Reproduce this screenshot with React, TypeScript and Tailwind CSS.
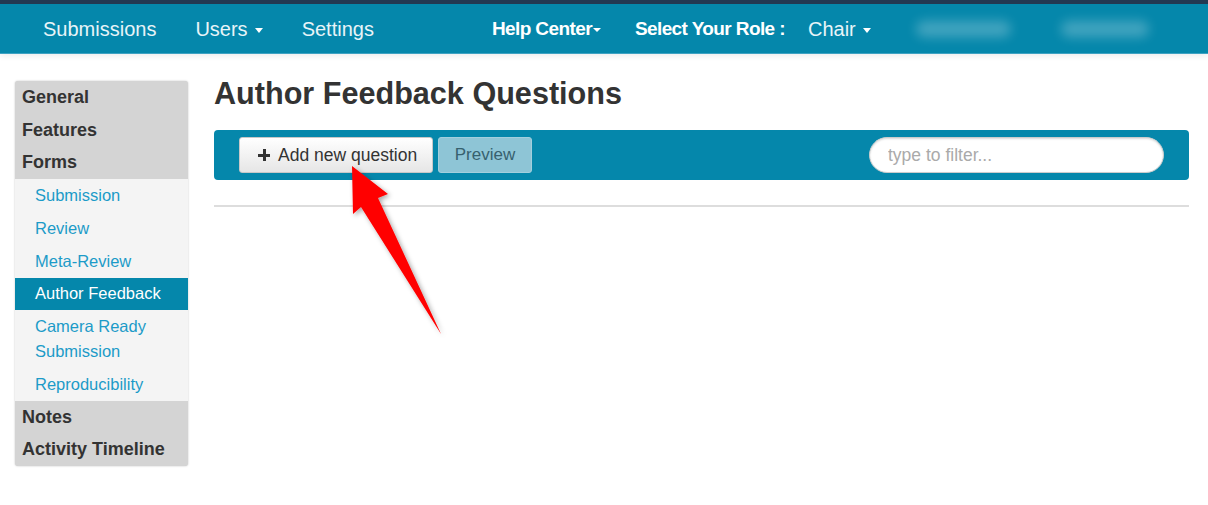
const Caret = () => (
  <span className="ml-[7px] inline-block h-0 w-0 border-x-[4.5px] border-t-[5px] border-x-transparent border-t-white align-middle" />
);

const topItem = "px-[7px] py-[4px] text-[18px] leading-[24.5px] font-bold text-[#333]";
const subItem = "pl-[20px] pr-[7px] py-[4px] text-[16.5px] leading-[25px] text-[#1c9bc8]";

const Sidebar = () => (
  <div className="mt-[3px] w-[173px] shrink-0 self-start overflow-hidden rounded-[3px] bg-[#d4d4d4] shadow-[0_0_2px_rgba(0,0,0,0.25)]">
    <div className={topItem}>General</div>
    <div className={topItem}>Features</div>
    <div className={topItem}>Forms</div>
    <div className="bg-[#f4f4f4]">
      <div className={subItem}>Submission</div>
      <div className={subItem}>Review</div>
      <div className={subItem}>Meta-Review</div>
      <div className="bg-[#0587ab] pl-[20px] pr-[7px] py-[3.5px] text-[16.5px] leading-[25px] text-white">
        Author Feedback
      </div>
      <div className={subItem}>
        Camera Ready
        <br />
        Submission
      </div>
      <div className={subItem}>Reproducibility</div>
    </div>
    <div className={topItem}>Notes</div>
    <div className={topItem}>Activity Timeline</div>
  </div>
);

const Navbar = () => (
  <div className="relative z-10 shadow-[0_2px_6px_rgba(0,0,0,0.08)]">
    <div className="h-[4px] bg-[#233952]" />
    <div className="flex h-[50px] items-center border-b border-[#3ea2c2] bg-[#0587ab] pl-[43px] text-white">
      <span className="text-[20px] text-[#e8f4f8]">Submissions</span>
      <span className="ml-[39px] text-[20px] text-[#e8f4f8]">
        Users
        <Caret />
      </span>
      <span className="ml-[39px] text-[20px] text-[#e8f4f8]">Settings</span>
      <span className="ml-[118px] pt-[2px] text-[19px] font-bold tracking-[-0.6px]">
        Help Center
        <span className="ml-[1px] inline-block h-0 w-0 border-x-[4px] border-t-[4px] border-x-transparent border-t-white align-middle" />
      </span>
      <span className="ml-[34px] pt-[2px] text-[19px] font-bold tracking-[-0.6px]">Select Your Role :</span>
      <span className="ml-[23px] text-[20px] text-[#e8f4f8]">
        Chair
        <Caret />
      </span>
      <div className="ml-[45px] h-[16px] w-[95px] rounded-full bg-white/25 blur-[6px]" />
      <div className="ml-[50px] h-[16px] w-[88px] rounded-full bg-white/25 blur-[6px]" />
    </div>
  </div>
);

// thick glyph-style plus used on the add button
const PlusIcon = () => (
  <span className="relative mr-[8px] inline-block h-[12px] w-[12px]">
    <span className="absolute left-0 top-[4.5px] h-[3px] w-[12px] bg-[#333]" />
    <span className="absolute left-[4.5px] top-0 h-[12px] w-[3px] bg-[#333]" />
  </span>
);

const Arrow = () => (
  <svg className="pointer-events-none absolute left-0 top-0" width="1208" height="505">
    <defs>
      <filter id="sh" x="-50%" y="-50%" width="200%" height="200%">
        <feDropShadow dx="2" dy="2" stdDeviation="2.5" floodColor="#000" floodOpacity="0.35" />
      </filter>
    </defs>
    <polygon
      points="352,166 388,194 378,198 441,334 361,207 353,214"
      fill="#ff0000"
      filter="url(#sh)"
    />
  </svg>
);

export default function App() {
  return (
    <div
      className="relative h-[505px] w-[1208px] overflow-hidden bg-white"
      style={{ fontFamily: '"Liberation Sans", Arial, sans-serif' }}
    >
      <Navbar />
      <div className="flex pl-[15px] pt-[24px]">
        <Sidebar />
        <div className="ml-[26px] w-[975px]">
          <h1 className="text-[30.6px] font-bold leading-[30px] text-[#333]">Author Feedback Questions</h1>
          <div className="mt-[22px] flex h-[50px] items-center rounded-[4px] bg-[#0587ab] px-[25px]">
            <button className="flex h-[36px] w-[194px] items-center rounded-[3px] border border-[#c8c8c8] bg-gradient-to-b from-white to-[#e6e6e6] pl-[18px] text-[17.5px] text-[#333]">
              <PlusIcon />
              Add new question
            </button>
            <button className="ml-[5px] flex h-[36px] w-[94px] items-center justify-center rounded-[3px] border border-[#a3cfdd] bg-[#8ec5d6] text-[17px] text-[#37616f]">
              Preview
            </button>
            <input
              className="ml-auto h-[36px] w-[295px] rounded-full border border-[#ccc] bg-white px-[18px] text-[17.5px] text-[#555] shadow-[inset_0_1px_2px_rgba(0,0,0,0.15)] outline-none placeholder:text-[#aaa]"
              placeholder="type to filter..."
            />
          </div>
          <div className="mt-[25px] h-[2px] bg-[#dddddd]" />
        </div>
      </div>
      <Arrow />
    </div>
  );
}
